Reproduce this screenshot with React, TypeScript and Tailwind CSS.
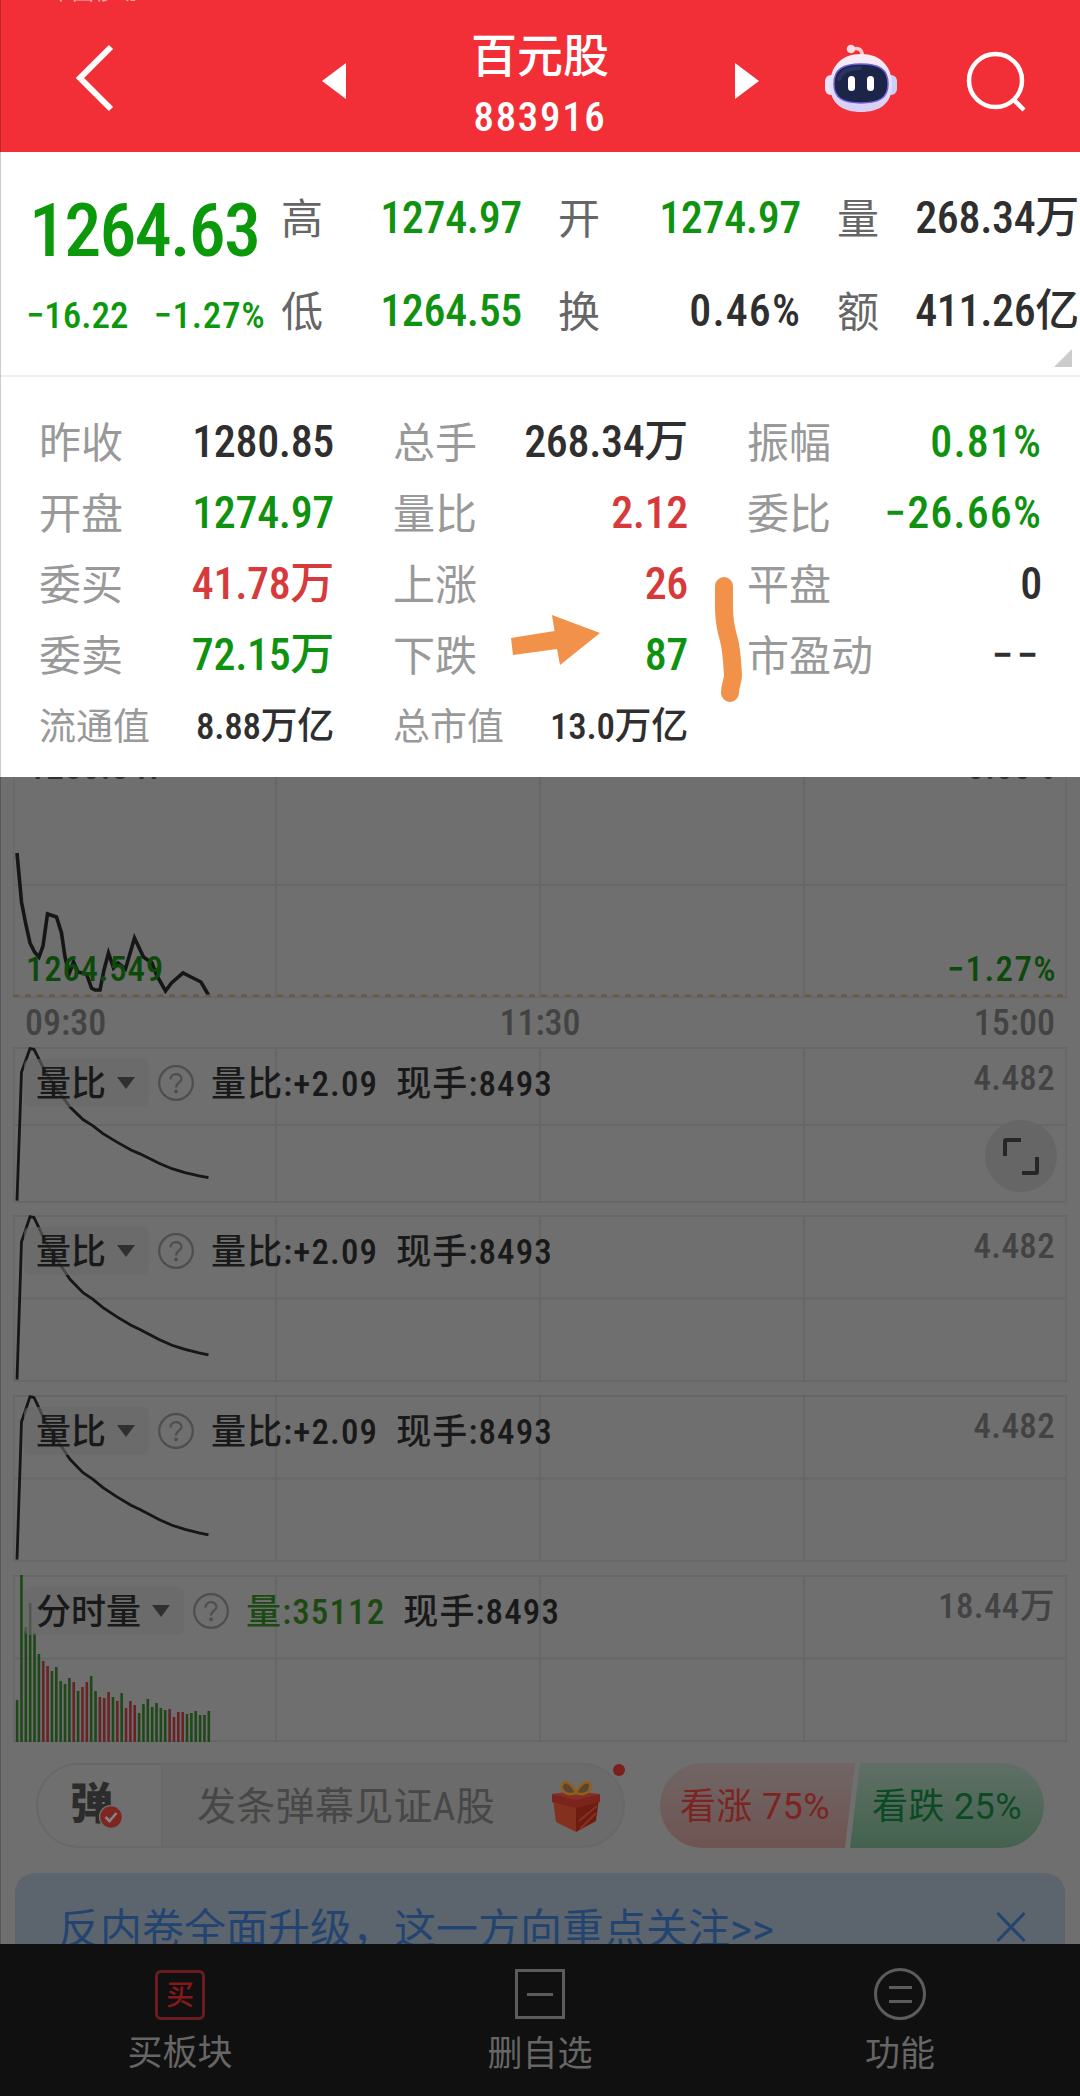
import type { ReactNode } from "react";

type Tone = "up" | "down" | "flat";

const toneClass: Record<Tone, string> = {
  up: "text-[#d63a3a]",
  down: "text-[#0f920f]",
  flat: "text-[#2f2f2f]",
};

const summary: { label: string; value: string; tone: Tone }[] = [
  { label: "高", value: "1274.97", tone: "down" },
  { label: "开", value: "1274.97", tone: "down" },
  { label: "量", value: "268.34万", tone: "flat" },
  { label: "低", value: "1264.55", tone: "down" },
  { label: "换", value: "0.46%", tone: "flat" },
  { label: "额", value: "411.26亿", tone: "flat" },
];

const details: { label: string; value: string; tone: Tone; small?: boolean }[] = [
  { label: "昨收", value: "1280.85", tone: "flat" },
  { label: "总手", value: "268.34万", tone: "flat" },
  { label: "振幅", value: "0.81%", tone: "down" },
  { label: "开盘", value: "1274.97", tone: "down" },
  { label: "量比", value: "2.12", tone: "up" },
  { label: "委比", value: "−26.66%", tone: "down" },
  { label: "委买", value: "41.78万", tone: "up" },
  { label: "上涨", value: "26", tone: "up" },
  { label: "平盘", value: "0", tone: "flat" },
  { label: "委卖", value: "72.15万", tone: "down" },
  { label: "下跌", value: "87", tone: "down" },
  { label: "市盈动", value: "−−", tone: "flat" },
  { label: "流通值", value: "8.88万亿", tone: "flat", small: true },
  { label: "总市值", value: "13.0万亿", tone: "flat", small: true },
];

const pricePoints =
  "4,76 8.5,125 13,148 17,166 21.5,175 26,180 30,169 34.5,137 43.5,140 48.5,156 52,180 56,197 60.5,185 65,195 73.5,197 78.5,211 82,213 87,213 91,193 95.5,176 100.5,191 105,186 112.5,192 121.5,161 130.5,180 139,186 143.5,198 152.5,214 158.5,206 170,196 178,200 188,205 195.5,218";

// x in pixels, y as a share of the panel height
const ratioCurve: [number, number][] = [
  [4, 0.985], [8.5, 0.16], [12, 0.1], [17, 0.01], [21, 0.015], [25, 0.065], [32, 0.155], [44, 0.27], [57, 0.385],
  [70, 0.465], [80, 0.505], [90, 0.555], [104, 0.61], [118, 0.66], [127, 0.685], [146, 0.745], [159, 0.78],
  [172, 0.805], [186, 0.826], [195.5, 0.838],
];

const volumeHeights = [
  42, 167, 115, 139, 109, 88, 81, 76, 71, 75, 61, 58, 64, 60, 51, 55, 60, 66, 51, 45, 44, 50, 45, 41, 49, 34, 41, 37,
  29, 38, 43, 35, 39, 34, 32, 33, 25, 30, 30, 28, 29, 31, 27, 27, 31,
];
const redBars = [6, 7, 13, 15, 16, 19, 20, 21, 23, 25, 26, 27, 35, 36, 37, 38];

function spacing(value: string) {
  if (value === "−−") return "tracking-[0.08em]";
  return value.includes("%") ? "tracking-[0.025em]" : "-tracking-[0.008em]";
}

function Grid({ height, mid }: { height: number; mid: number }) {
  return (
    <g stroke="#676767" strokeWidth="2" fill="none">
      <rect x="0.5" y="1" width="1053" height={height - 2} />
      <path d={`M0 ${mid}H1054M263 0V${height}M527 0V${height}M791 0V${height}`} />
    </g>
  );
}

function Panel({
  name,
  left,
  leftClass = "",
  scale,
  height,
  gap = "",
  over,
  children,
}: {
  name: string;
  left: string;
  leftClass?: string;
  scale: string;
  height: number;
  gap?: string;
  over?: ReactNode;
  children: ReactNode;
}) {
  return (
    <section className={`relative mx-[13px] shrink-0 ${gap}`} style={{ height }}>
      <svg className="absolute inset-0" width="1054" height={height}>
        <Grid height={height} mid={height / 2} />
        {children}
      </svg>
      <div className="relative flex h-12 translate-y-3 items-center text-[35px] leading-none font-medium tracking-[0.032em] text-[#191919]">
        <div className="ml-[11px] flex h-12 items-center gap-[11px] rounded-md bg-[#696969]/60 pr-[14px] pl-[12px] tracking-normal">
          <span className="pt-[3px]">{name}</span>
          <svg width="18" height="12" viewBox="0 0 18 12">
            <path d="M0 0H18L9 12Z" fill="#303030" />
          </svg>
        </div>
        <svg className="ml-[9px] shrink-0" width="36" height="36" viewBox="0 0 36 36" fill="none" stroke="#4e4e4e" strokeWidth="2.2">
          <circle cx="18" cy="18" r="16.8" />
          <path d="M12.5 14.5C12.5 7.500 23.500 7.500 23.500 14C23.500 18 18 17.500 18 22.500" />
          <circle cx="18" cy="26.300" r="0.800" fill="#4e4e4e" />
        </svg>
        <span className={`ml-[17px] pt-[3px] ${leftClass}`}>{left}</span>
        <span className="ml-[18px] pt-[3px]">现手:8493</span>
        <span className="mr-3 mb-[9px] ml-auto tracking-[0.01em] text-[#434343]">{scale}</span>
      </div>
      {over}
    </section>
  );
}

function RatioPanel({ height, gap, over }: { height: number; gap?: string; over?: ReactNode }) {
  return (
    <Panel name="量比" left="量比:+2.09" scale="4.482" height={height} gap={gap} over={over}>
      <polyline
        points={ratioCurve.map(([x, y]) => `${x},${y * height}`).join(" ")}
        fill="none"
        stroke="#161616"
        strokeWidth="2.8"
      />
    </Panel>
  );
}

function Robot() {
  return (
    <svg width="74" height="72" viewBox="0 0 74 72">
      <defs>
        <linearGradient id="shell" x1="0" y1="0" x2="0" y2="1">
          <stop offset="0" stopColor="#fdeef4" />
          <stop offset="0.6" stopColor="#e3dcf8" />
          <stop offset="1" stopColor="#d5cdf5" />
        </linearGradient>
      </defs>
      <path d="M28 7C35 5 38 8 38.500 14" fill="none" stroke="#ffc9d2" strokeWidth="3.500" />
      <circle cx="27" cy="7" r="4.300" fill="#ffdbe2" />
      <rect x="1" y="33" width="12" height="20" rx="6" fill="#e9e4fb" />
      <rect x="61" y="33" width="12" height="20" rx="6" fill="#c8d2f8" />
      <path d="M37 12C57 12 68 25 68 43C68 62 55 70 37 70C19 70 6 62 6 43C6 25 17 12 37 12Z" fill="url(#shell)" />
      <path
        d="M37 22C55 22 64 27 64 42C64 56 55 61 37 61C19 61 10 56 10 42C10 27 19 22 37 22Z"
        fill="#1c2548"
        stroke="#6b5fe0"
        strokeWidth="1.500"
      />
      <path d="M15 37C18 28 26 26 36 26" fill="none" stroke="#2a3560" strokeWidth="4" strokeLinecap="round" />
      <rect x="24" y="34" width="7" height="15" rx="3.500" fill="#fff" />
      <rect x="43" y="34" width="7" height="15" rx="3.500" fill="#fff" />
    </svg>
  );
}

function Gift() {
  return (
    <svg width="48" height="54" viewBox="0 0 48 54">
      <path d="M1 20L24 26V53L4 43Z" fill="#83301f" />
      <path d="M47 20L24 26V53L44 42Z" fill="#6f1c10" />
      <path d="M0 15L24 20L48 15V23L24 29L0 23Z" fill="#7a251c" />
      <path d="M0 15L22 12L48 15L24 21Z" fill="#872d24" />
      <path d="M28 50L44 34M27 42L45 27M6 33L20 47" stroke="#833322" strokeWidth="2" />
      <path
        d="M24 14C18 1 9 0 10 9C11 15 18 16 24 14ZM24 14C30 1 40 0 38 9C37 15 30 16 24 14Z"
        fill="#5a4432"
        stroke="#8d601c"
        strokeWidth="2.600"
      />
    </svg>
  );
}

function Header() {
  return (
    <header className="relative flex h-[152px] shrink-0 items-center overflow-hidden bg-[#f22f37] text-white">
      <span className="absolute -top-[19px] left-[50px] text-[22px] leading-none text-white/60">中国移动</span>
      <svg className="mt-[4px] ml-[74px]" width="40" height="68" viewBox="0 0 40 68">
        <path d="M37 3L6 34L37 65" fill="none" stroke="#fff" strokeWidth="6" />
      </svg>
      <svg className="mt-[9px] ml-[208px]" width="24" height="36" viewBox="0 0 24 36">
        <path d="M0 18L24 0V36Z" fill="#fff" />
      </svg>
      <div className="ml-[94px] flex w-[200px] flex-col items-center pt-[18px] leading-none font-medium">
        <h1 className="text-[46px] leading-[46px]">百元股</h1>
        <p className="mt-[18px] text-[41px] tracking-[0.04em]">883916</p>
      </div>
      <svg className="mt-[9px] ml-[95px]" width="24" height="36" viewBox="0 0 24 36">
        <path d="M24 18L0 0V36Z" fill="#fff" />
      </svg>
      <div className="mt-[3px] ml-[65px]">
        <Robot />
      </div>
      <svg className="mt-[9px] ml-[67px]" width="62" height="62" viewBox="0 0 62 62" fill="none" stroke="#fff" strokeWidth="4.500">
        <circle cx="30.500" cy="30.500" r="26.500" />
        <path d="M49 50L59 60" />
      </svg>
    </header>
  );
}

function Quote() {
  return (
    <section className="relative flex h-[225px] shrink-0 border-b-2 border-[#eeeeee] bg-white font-medium">
      <div className="w-[281px] pt-[42px] text-[#0b980b]">
        <p className="pl-[29px] text-[74px] leading-none -tracking-[0.024em]">1264.63</p>
        <p className="mt-[28px] flex gap-[25px] pl-[26px] text-[37px] leading-10 whitespace-nowrap">
          <span>−16.22</span>
          <span className="tracking-[0.02em]">−1.27%</span>
        </p>
      </div>
      <div className="grid grid-cols-[241px_243px_242px] grid-rows-[93px_93px] gap-x-[36px] pt-[19px]">
        {summary.map((item) => (
          <div key={item.label} className="flex items-center justify-between whitespace-nowrap">
            <span className="pt-[4px] text-[42px] leading-none font-normal text-[#666666]">{item.label}</span>
            <span className={`text-[44px] leading-none ${spacing(item.value)} ${toneClass[item.tone]}`}>{item.value}</span>
          </div>
        ))}
      </div>
      <svg className="absolute right-2 bottom-[8px]" width="18" height="18" viewBox="0 0 18 18">
        <path d="M18 0V18H0Z" fill="#cccccc" />
      </svg>
    </section>
  );
}

function Details() {
  return (
    <section className="relative grid h-[400px] shrink-0 auto-rows-[71px] grid-cols-3 gap-x-[59px] bg-white pt-[29px] pr-[38px] pl-[39px]">
      {details.map((item) => (
        <div key={item.label} className="flex items-center justify-between whitespace-nowrap">
          <span className={`pt-[4px] leading-none text-[#999999] ${item.small ? "text-[37px]" : "text-[42px]"}`}>
            {item.label}
          </span>
          <span
            className={`leading-none font-medium ${item.small ? "pt-[2px] text-[37px]" : "text-[44px]"} ${spacing(item.value)} ${toneClass[item.tone]}`}
          >
            {item.value}
          </span>
        </div>
      ))}
      {/* hand-drawn marks */}
      <svg className="absolute top-[190px] left-[500px]" width="250" height="150" viewBox="500 567 250 150">
        <path d="M511 638L554.500 631L552 615L600 633L560 665L557 649L513 655Z" fill="#f29149" />
        <path
          d="M724 586V608C724 620 726 630 729 640C732 652 732 662 733 675C733 682 730 684 730 693"
          fill="none"
          stroke="#f29149"
          strokeWidth="18"
          strokeLinecap="round"
        />
      </svg>
    </section>
  );
}

function PriceChart() {
  return (
    <section className="relative mx-[13px] h-[221px] shrink-0 overflow-hidden text-[35px] leading-none font-medium tracking-[0.02em]">
      <svg className="absolute inset-0" width="1054" height="221">
        <path
          d="M0.500 0V221M1053.500 0V221M263 0V221M527 0V221M791 0V221M0 108H1054M0 220H1054"
          stroke="#676767"
          strokeWidth="2"
        />
        <polyline points={pricePoints} fill="none" stroke="#161616" strokeWidth="3.600" />
        <path d="M0 218.500H1054" stroke="#6b5836" strokeWidth="2" strokeDasharray="6 6" />
      </svg>
      <div className="relative -mt-[27px] flex justify-between pr-[12px] pl-[15px] text-[#303030]">
        <span>1280.847</span>
        <span>0.00%</span>
      </div>
      <div className="relative mt-[167px] flex justify-between pr-[10px] pl-[13px] text-[#0c4a0c]">
        <span>1264.549</span>
        <span className="tracking-[0.04em]">−1.27%</span>
      </div>
    </section>
  );
}

function Barrage() {
  return (
    <div className="mt-[21px] flex h-[85px] shrink-0 items-center pl-[36px]">
      <div className="relative flex h-[85px] w-[589px] items-center overflow-visible rounded-full border-2 border-[#686868] bg-[#6b6b6b]">
        <div className="relative flex h-full w-[125px] items-center rounded-l-full border-r-2 border-[#686868] bg-[#6f6f6f] pl-[32px]">
          <span className="mb-[2px] text-[43px] leading-none font-black text-[#2c2c2c]">弹</span>
          <svg className="absolute top-[40px] left-[61px]" width="24" height="24" viewBox="0 0 24 24">
            <circle cx="12" cy="12" r="11.500" fill="#7e2620" stroke="#6f6f6f" strokeWidth="1.500" />
            <path d="M6.500 12L10.500 16L17.500 8" fill="none" stroke="#858585" strokeWidth="2.600" />
          </svg>
        </div>
        <span className="ml-[34px] pt-[4px] text-[39px] leading-none tracking-[0.008em] text-[#474747]">
          发条弹幕见证A股
        </span>
        <div className="ml-[57px]">
          <Gift />
        </div>
        <span className="absolute -top-[1px] right-[-2px] size-3 rounded-full bg-[#7c1f1f]" />
      </div>
      <div className="relative ml-[35px] flex h-[85px] w-[384px] items-center pt-[3px] text-[36px] leading-none [font-stretch:88%]">
        <svg className="absolute inset-0" width="384" height="85">
          <defs>
            <linearGradient id="bull" x1="0" y1="0" x2="0" y2="1">
              <stop offset="0" stopColor="#706665" />
              <stop offset="1" stopColor="#6e5452" />
            </linearGradient>
            <linearGradient id="bear" x1="0" y1="0" x2="0" y2="1">
              <stop offset="0" stopColor="#606f66" />
              <stop offset="1" stopColor="#43624e" />
            </linearGradient>
          </defs>
          <path d="M42.500 0H195L185 85H42.500A42.500 42.500 0 0 1 42.500 0Z" fill="url(#bull)" />
          <path d="M200 0H341.500A42.500 42.500 0 0 1 341.500 85H190Z" fill="url(#bear)" />
        </svg>
        <span className="relative ml-[20px] w-[192px] tracking-[0.01em] text-[#7c2422]">看涨 75%</span>
        <span className="relative tracking-[0.01em] text-[#0b4a25]">看跌 25%</span>
      </div>
    </div>
  );
}

function BottomBar() {
  return (
    <nav className="grid h-[152px] shrink-0 grid-cols-3 bg-[#101010] text-[35px] leading-none text-[#666666]">
      <div className="flex flex-col items-center pt-[26px]">
        <div className="flex size-[50px] items-center justify-center rounded-md border-3 border-[#6b1c1e] pt-px text-[28px] leading-none font-medium text-[#84191c]">
          买
        </div>
        <span className="mt-[16px]">买板块</span>
      </div>
      <div className="flex flex-col items-center pt-[25px]">
        <div className="flex size-[50px] items-center justify-center border-3 border-[#5c5c5c]">
          <div className="h-[3px] w-[26px] bg-[#5c5c5c]" />
        </div>
        <span className="mt-[18px]">删自选</span>
      </div>
      <div className="flex flex-col items-center pt-[24px]">
        <div className="flex size-[52px] flex-col items-center justify-center gap-[11px] rounded-full border-3 border-[#5c5c5c]">
          <div className="h-[3px] w-[23px] bg-[#5c5c5c]" />
          <div className="h-[3px] w-[23px] bg-[#5c5c5c]" />
        </div>
        <span className="mt-[17px]">功能</span>
      </div>
    </nav>
  );
}

export default function App() {
  return (
    <main className="relative flex h-[2096px] w-[1080px] flex-col overflow-hidden bg-white font-['Roboto','Noto_Sans_CJK_SC',sans-serif] [font-stretch:75%]">
      <Header />
      <Quote />
      <Details />
      <div className="flex h-[1167px] shrink-0 flex-col overflow-hidden bg-[#6f6f6f]">
        <PriceChart />
        <div className="flex h-[49px] shrink-0 items-center justify-between pt-px pr-[25px] pl-[25px] text-[36px] leading-none font-medium text-[#434343]">
          <span>09:30</span>
          <span>11:30</span>
          <span>15:00</span>
        </div>
        <RatioPanel
          height={156}
          over={
            <div className="absolute top-[73px] right-[10px] flex size-[72px] items-center justify-center rounded-full bg-[#666666]">
              <svg width="36" height="38" viewBox="0 0 36 38" fill="none" stroke="#262626" strokeWidth="4">
                <path d="M2 19V4Q2 3 3 3H18" />
                <path d="M34 20V35Q34 36 33 36H19" />
              </svg>
            </div>
          }
        />
        <RatioPanel height={167} gap="mt-3" />
        <RatioPanel height={167} gap="mt-[13px]" />
        <Panel
          name="分时量"
          left="量:35112"
          leftClass="text-[#1c4a12]"
          scale="18.44万"
          height={167}
          gap="mt-[13px]"
        >
          {volumeHeights.map((h, i) => (
            <rect
              key={i}
              x={2.8 + i * 4.357}
              y={167 - h}
              width="2.600"
              height={h}
              fill={redBars.includes(i) ? "#672325" : "#1f4819"}
            />
          ))}
        </Panel>
        <Barrage />
        <div className="mx-[15px] mt-[25px] flex h-[120px] shrink-0 items-start justify-between rounded-[20px] bg-[#5c646e] pt-[36px] pr-[39px] pl-[43px]">
          <p className="text-[42px] leading-none text-[#23446f] [font-stretch:100%]">反内卷全面升级，这一方向重点关注&gt;&gt;</p>
          <svg className="mt-[2px]" width="30" height="32" viewBox="0 0 30 32">
            <path d="M1.500 2L28.500 30M28.500 2L1.500 30" stroke="#23446f" strokeWidth="3" />
          </svg>
        </div>
      </div>
      <BottomBar />
      <div className="absolute top-0 left-0 h-[1944px] w-px bg-black/20" />
    </main>
  );
}
